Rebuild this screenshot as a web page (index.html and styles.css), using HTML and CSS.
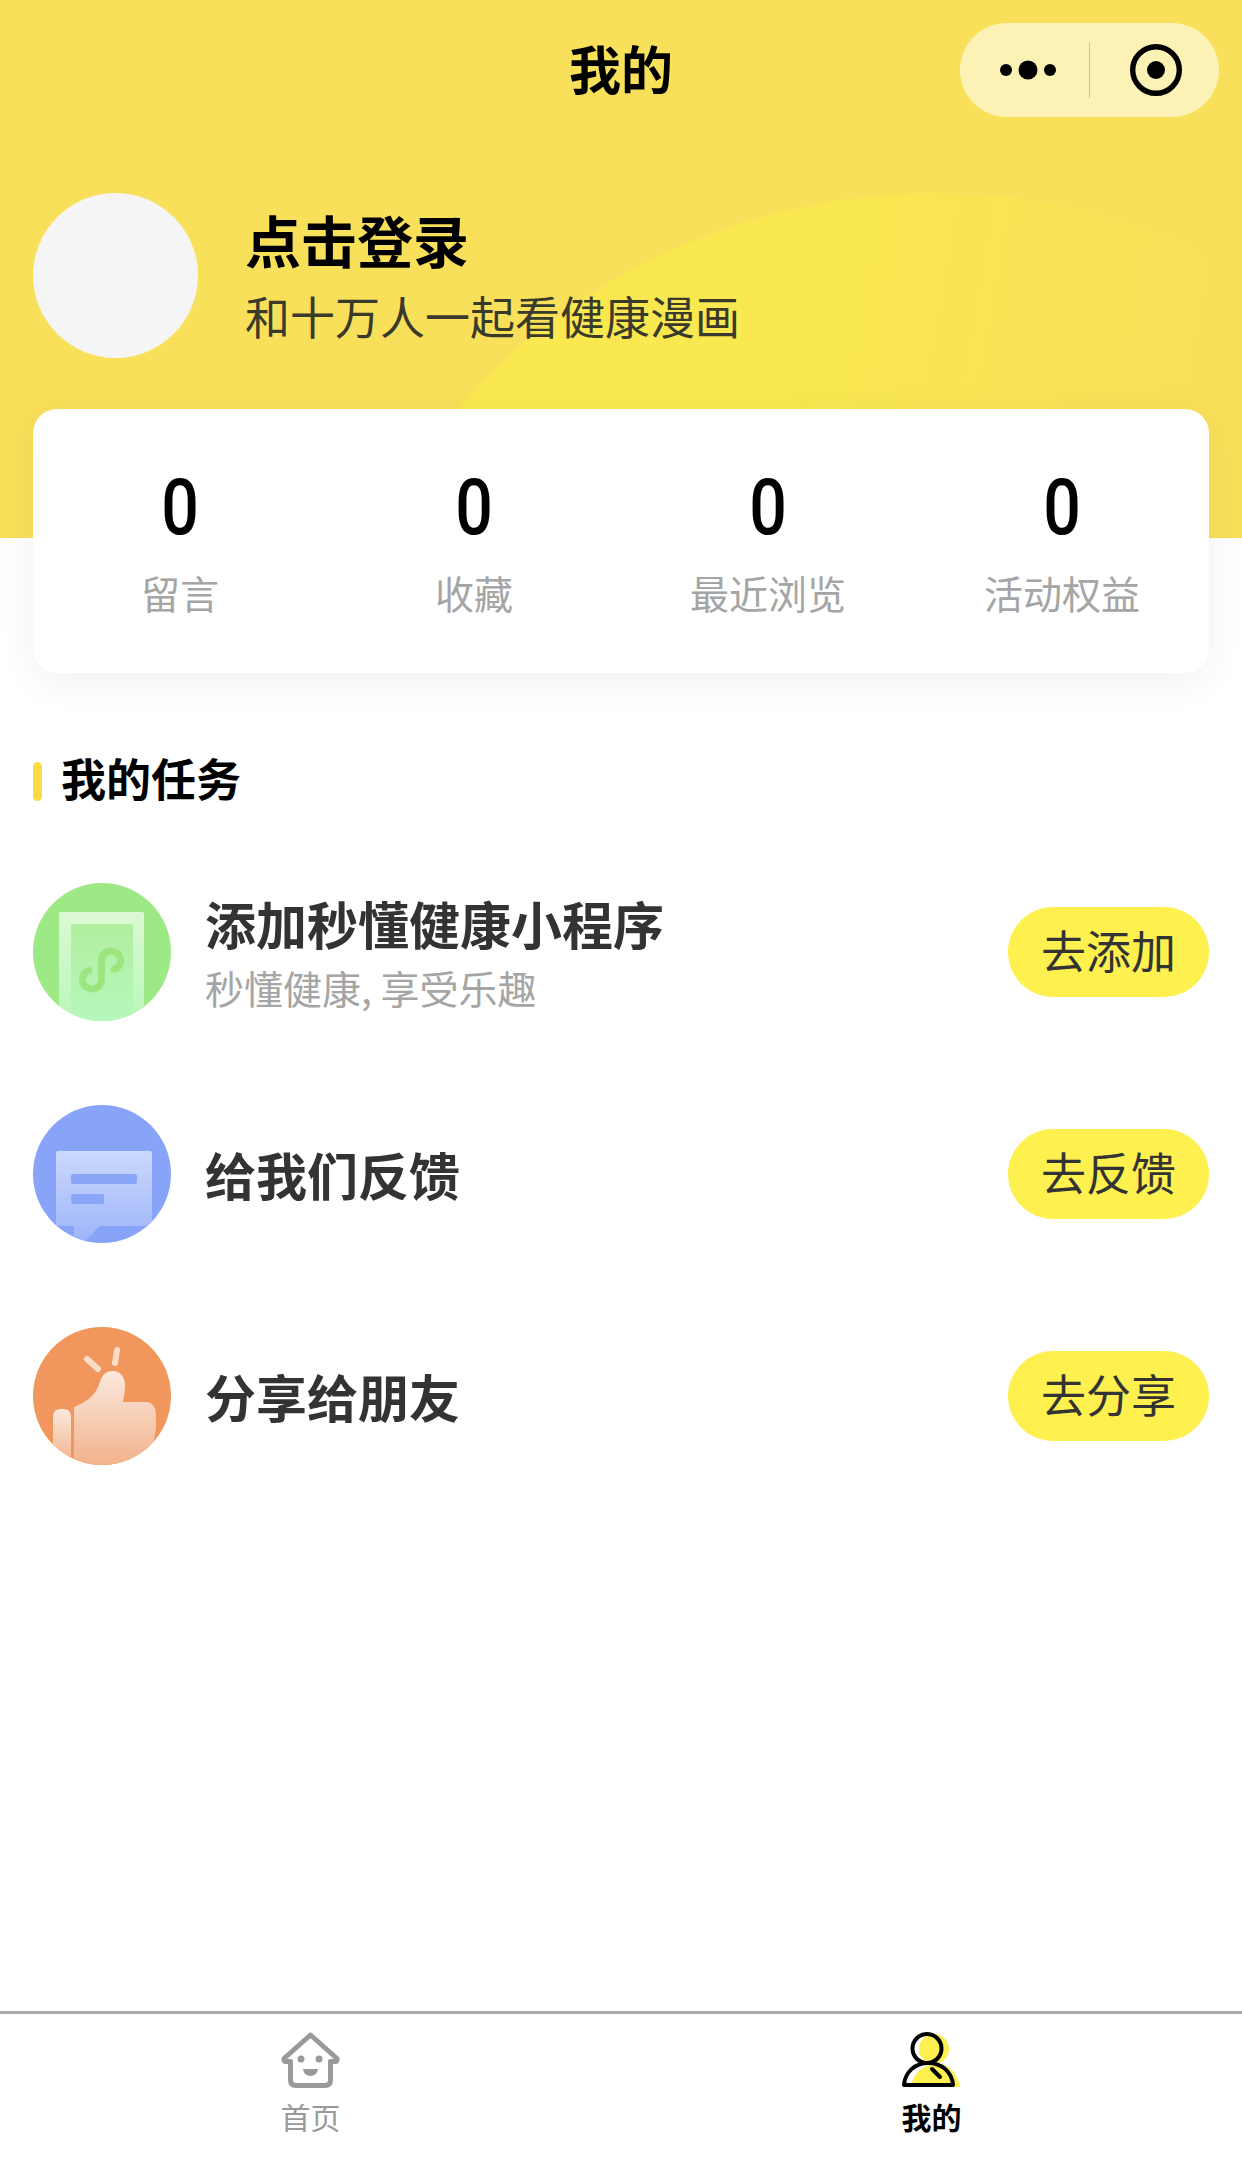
FILE: index.html
```html
<!DOCTYPE html>
<html lang="zh-CN">
<head>
    <meta charset="UTF-8">
    <meta name="viewport" content="width=device-width, initial-scale=1.0">
    <title>我的</title>
    <link rel="stylesheet" href="styles.css">
</head>
<body>
    <div class="page">
        <header class="hero">
            <div class="hero-blob"></div>
            <div class="nav">
                <h1 class="nav-title">我的</h1>
                <div class="capsule">
                    <svg class="capsule-more" viewBox="0 0 56 20" width="56" height="20">
                        <circle cx="6" cy="10" r="6"/>
                        <circle cx="28" cy="10" r="9.5"/>
                        <circle cx="50" cy="10" r="6"/>
                    </svg>
                    <span class="capsule-line"></span>
                    <svg class="capsule-close" viewBox="0 0 52 52" width="52" height="52">
                        <circle cx="26" cy="26" r="23.3" fill="none" stroke="#000" stroke-width="5.4"/>
                        <circle cx="26" cy="26" r="9"/>
                    </svg>
                </div>
            </div>
            <div class="profile">
                <div class="avatar"></div>
                <div class="profile-text">
                    <div class="login">点击登录</div>
                    <div class="slogan">和十万人一起看健康漫画</div>
                </div>
            </div>
        </header>

        <section class="stats">
            <div class="stat"><div class="stat-num">0</div><div class="stat-label">留言</div></div>
            <div class="stat"><div class="stat-num">0</div><div class="stat-label">收藏</div></div>
            <div class="stat"><div class="stat-num">0</div><div class="stat-label">最近浏览</div></div>
            <div class="stat"><div class="stat-num">0</div><div class="stat-label">活动权益</div></div>
        </section>

        <h2 class="section-title">我的任务</h2>

        <ul class="tasks">
            <li class="task">
                <svg class="task-icon" viewBox="0 0 138 138" width="138" height="138">
                    <defs>
                        <clipPath id="clipA"><circle cx="69" cy="69" r="69"/></clipPath>
                        <linearGradient id="greenOuter" x1="0" y1="0" x2="0" y2="1">
                            <stop offset="0" stop-color="#dcf9d3"/>
                            <stop offset="1" stop-color="#b8f7bb"/>
                        </linearGradient>
                        <linearGradient id="greenInner" x1="0" y1="0" x2="0" y2="1">
                            <stop offset="0" stop-color="#b2ee9f"/>
                            <stop offset="1" stop-color="#b6f8bc"/>
                        </linearGradient>
                    </defs>
                    <g clip-path="url(#clipA)">
                        <rect width="138" height="138" fill="#9de985"/>
                        <rect x="26" y="29" width="85" height="109" rx="2" fill="url(#greenOuter)"/>
                        <rect x="38" y="41" width="62" height="97" rx="2" fill="url(#greenInner)"/>
                        <path d="M56 87.500A9.500 9.500 0 1 0 68.500 96.500V77.500A9.500 9.500 0 1 1 81 86.500" fill="none" stroke="#9be67f" stroke-width="7" stroke-linecap="round"/>
                    </g>
                </svg>
                <div class="task-text task-text-two">
                    <div class="task-title">添加秒懂健康小程序</div>
                    <div class="task-sub">秒懂健康, 享受乐趣</div>
                </div>
                <button class="task-btn">去添加</button>
            </li>
            <li class="task">
                <svg class="task-icon" viewBox="0 0 138 138" width="138" height="138">
                    <defs>
                        <clipPath id="clipB"><circle cx="69" cy="69" r="69"/></clipPath>
                        <linearGradient id="blueCard" x1="0" y1="0" x2="0" y2="1">
                            <stop offset="0" stop-color="#cbd9fd"/>
                            <stop offset="1" stop-color="#9db4fa"/>
                        </linearGradient>
                    </defs>
                    <g clip-path="url(#clipB)">
                        <rect width="138" height="138" fill="#87a4f8"/>
                        <path d="M25 46H117a2 2 0 0 1 2 2V121H67L50 138H41V121H23V48a2 2 0 0 1 2-2z" fill="url(#blueCard)"/>
                        <rect x="38" y="69" width="66" height="10" rx="2" fill="#89a6f8"/>
                        <rect x="38" y="89" width="33" height="10" rx="2" fill="#89a6f8"/>
                    </g>
                </svg>
                <div class="task-text">
                    <div class="task-title">给我们反馈</div>
                </div>
                <button class="task-btn">去反馈</button>
            </li>
            <li class="task">
                <svg class="task-icon" viewBox="0 0 138 138" width="138" height="138">
                    <defs>
                        <clipPath id="clipC"><circle cx="69" cy="69" r="69"/></clipPath>
                        <linearGradient id="handFill" x1="0" y1="0" x2="0" y2="1">
                            <stop offset="0" stop-color="#fbe9de"/>
                            <stop offset="1" stop-color="#f3b28c"/>
                        </linearGradient>
                    </defs>
                    <g clip-path="url(#clipC)">
                        <rect width="138" height="138" fill="#f1975d"/>
                        <path d="M20 138V89a7 7 0 0 1 7-7h4a7 7 0 0 1 7 7v49z" fill="url(#handFill)"/>
                        <path d="M41 80C54 75 63 68 67 55C69 47 74 44 80 44C87 44 92 50 92 58C92 65 91 70 90 75H113C119 75 123 80 123 87V100L117 138H41z" fill="url(#handFill)"/>
                        <path d="M54 32L65 42M84 23L82 36" fill="none" stroke="#fbdcc8" stroke-width="6" stroke-linecap="round"/>
                    </g>
                </svg>
                <div class="task-text">
                    <div class="task-title">分享给朋友</div>
                </div>
                <button class="task-btn">去分享</button>
            </li>
        </ul>

        <nav class="tabbar">
            <div class="tab">
                <svg class="tab-icon" viewBox="0 0 60 56" width="60" height="56">
                    <path d="M29.500 3L3 26.500Q2.500 29.500 5 29.500H9.500V48Q9.500 53.500 15 53.500H44Q49.500 53.500 49.500 48V29.500H54Q56.500 29.500 56 26.500z" fill="none" stroke="#999" stroke-width="5" stroke-linejoin="round"/>
                    <circle cx="20" cy="27" r="3.500" fill="#999"/>
                    <circle cx="38" cy="27" r="3.500" fill="#999"/>
                    <path d="M22 37H37Q36 44 29.500 44Q23 44 22 37z" fill="#999"/>
                </svg>
                <span class="tab-label">首页</span>
            </div>
            <div class="tab tab-active">
                <svg class="tab-icon" viewBox="0 0 60 56" width="60" height="56">
                    <circle cx="32" cy="17" r="15" fill="#fdf04f"/>
                    <path d="M9 55C11 42 20 32 36 32C48 32 56 44 58 55z" fill="#fdf04f"/>
                    <circle cx="25" cy="16.500" r="14.500" fill="none" stroke="#000" stroke-width="4"/>
                    <path d="M2 53C3 40 13 31 26 31C40 31 50 40 51 53z" fill="none" stroke="#000" stroke-width="4" stroke-linejoin="round"/>
                    <path d="M30 37L38 45" fill="none" stroke="#000" stroke-width="4" stroke-linecap="round"/>
                </svg>
                <span class="tab-label">我的</span>
            </div>
        </nav>
    </div>
</body>
</html>
```

FILE: styles.css
```css
* {
    box-sizing: border-box;
}

body {
    margin: 0;
    background: #fff;
    font-family: "Noto Sans CJK SC", "Noto Sans", sans-serif;
    color: #333;
}

.page {
    display: flex;
    flex-direction: column;
    height: 2158px;
    overflow: hidden;
}

/* top yellow area */
.hero {
    position: relative;
    height: 538px;
    flex: none;
    overflow: hidden;
    background: #f9e05a;
}

.hero-blob {
    position: absolute;
    left: 296px;
    top: 193px;
    width: 1280px;
    height: 1280px;
    border-radius: 50%;
    background: linear-gradient(100deg, #f9e850 0%, #f9e850 35%, #f9e05a 62%);
}

.nav {
    position: relative;
    display: grid;
    grid-template-columns: minmax(0, 1fr) auto minmax(0, 1fr);
    align-items: center;
    padding: 23px 23px 0;
}

.nav-title {
    grid-column: 2;
    margin: 0 0 5px;
    font-size: 52px;
    line-height: 89px;
    font-weight: 700;
    color: #000;
}

.capsule {
    grid-column: 3;
    justify-self: end;
    display: flex;
    align-items: center;
    width: 259px;
    height: 94px;
    padding-left: 40px;
    background: #fdf2b6;
    border-radius: 47px;
}

.capsule-line {
    width: 1px;
    height: 56px;
    margin: 0 40px 0 33px;
    background: #cfc28a;
}

.profile {
    position: relative;
    display: flex;
    align-items: center;
    margin-top: 76px;
    padding-left: 33px;
}

.avatar {
    width: 165px;
    height: 165px;
    border-radius: 50%;
    background: #f5f5f5;
}

.profile-text {
    margin-left: 47px;
}

.login {
    font-size: 56px;
    line-height: 76px;
    font-weight: 700;
    color: #000;
}

.slogan {
    margin-top: 3px;
    font-size: 45px;
    line-height: 71px;
    color: #3a3a2a;
}

/* numbers card */
.stats {
    position: relative;
    flex: none;
    display: grid;
    grid-template-columns: repeat(4, 1fr);
    height: 264px;
    margin: -129px 33px 0;
    padding-top: 61px;
    background: #fff;
    border-radius: 24px;
    box-shadow: 0 8px 40px rgba(0, 0, 0, 0.06);
    text-align: center;
}

.stat-num {
    font-family: Roboto, sans-serif;
    font-size: 77px;
    line-height: 76px;
    font-weight: 500;
    color: #000;
    transform: scaleX(0.86);
}

.stat-label {
    margin-top: 21px;
    font-size: 39px;
    line-height: 50px;
    color: #a5a5a5;
}

.section-title {
    position: relative;
    margin: 75px 0 3px 33px;
    padding-left: 28px;
    font-size: 45px;
    line-height: 60px;
    font-weight: 700;
    color: #000;
}

.section-title::before {
    content: "";
    position: absolute;
    left: 0;
    top: 14px;
    width: 9px;
    height: 39px;
    border-radius: 5px;
    background: #fbdb45;
}

/* task rows */
.tasks {
    display: flex;
    flex-direction: column;
    gap: 84px;
    margin: 72px 33px 0;
    padding: 0;
    list-style: none;
}

.task {
    display: flex;
    align-items: center;
    height: 138px;
}

.task-icon {
    flex: none;
}

.task-text {
    flex: 1;
    margin-left: 34px;
}

.task-text-two {
    padding-top: 6px;
}

.task-title {
    font-size: 51px;
    line-height: 64px;
    font-weight: 700;
    color: #333;
}

.task-sub {
    font-size: 39px;
    line-height: 64px;
    color: #a5a5a5;
}

.task-btn {
    width: 201px;
    height: 90px;
    padding: 0 0 5px;
    border: none;
    border-radius: 45px;
    background: #fdf04f;
    font-family: inherit;
    font-size: 45px;
    color: #333;
}

/* bottom tabs */
.tabbar {
    display: grid;
    grid-template-columns: 1fr 1fr;
    height: 147px;
    margin-top: auto;
    border-top: 3px solid #aaa;
    background: #fff;
}

.tab {
    display: flex;
    flex-direction: column;
    align-items: center;
    padding-top: 18px;
    color: #999;
}

.tab-active {
    color: #000;
    font-weight: 700;
}

.tab-icon {
    display: block;
}

.tab-label {
    margin-top: 8px;
    font-size: 30px;
    line-height: 40px;
}
```
